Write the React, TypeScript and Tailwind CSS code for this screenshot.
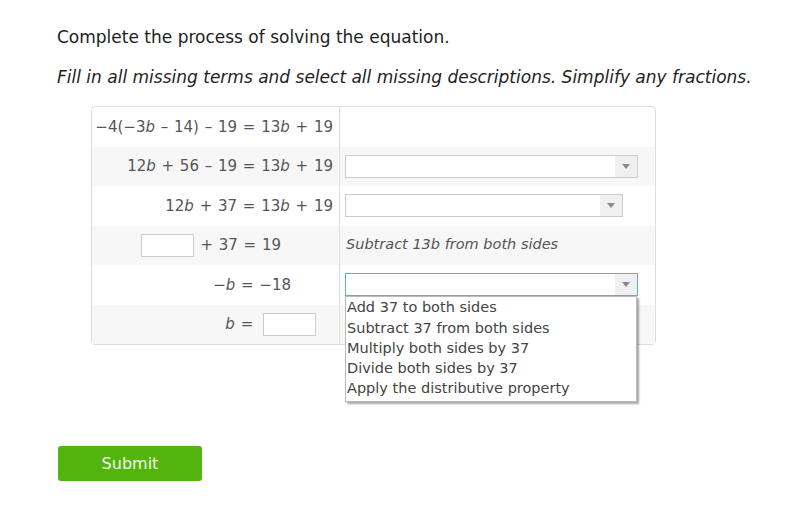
const Arrow = () => (
  <div className="w-[22px] h-full bg-[#f0f0f0] flex items-center justify-center">
    <div className="w-0 h-0 border-l-[4px] border-r-[4px] border-t-[5px] border-l-transparent border-r-transparent border-t-[#888]" />
  </div>
)

const Select = ({ width, focused }: { width: string; focused?: boolean }) => (
  <div className={`${width} h-[23px] bg-white border flex justify-end ${focused ? "border-[#5ab0d0]" : "border-[#ccc]"}`}>
    <Arrow />
  </div>
)

const B = () => <i>b</i>

const options = [
  "Add 37 to both sides",
  "Subtract 37 from both sides",
  "Multiply both sides by 37",
  "Divide both sides by 37",
  "Apply the distributive property",
]

const App = () => {
  return (
    <div className="w-[800px] h-[512px] bg-white pl-[57px] pt-[27px] font-['DejaVu_Sans',Verdana,sans-serif] text-[#222]">
      <p className="text-[17px] leading-5">Complete the process of solving the equation.</p>
      <p className="mt-5 text-[17px] leading-5 italic">Fill in all missing terms and select all missing descriptions. Simplify any fractions.</p>

      <div className="ml-[34px] mt-[19px] w-[565px] border border-[#ddd] rounded text-[15px] text-[#555] [word-spacing:1px]">
        <div className="flex h-[39.5px]">
          <div className="w-[248px] border-r border-[#ddd] flex items-center justify-end pr-[6px] whitespace-pre">
            −4(−3<B /> – 14) – 19 = 13<B /> + 19
          </div>
          <div className="flex-1" />
        </div>

        <div className="flex h-[39.5px] bg-[#f7f7f7]">
          <div className="w-[248px] border-r border-[#ddd] flex items-center justify-end pr-[6px] whitespace-pre">
            12<B /> + 56 – 19 = 13<B /> + 19
          </div>
          <div className="flex-1 flex items-center pl-[5px]">
            <Select width="w-[293px]" />
          </div>
        </div>

        <div className="flex h-[39.5px]">
          <div className="w-[248px] border-r border-[#ddd] flex items-center justify-end pr-[6px] whitespace-pre">
            12<B /> + 37 = 13<B /> + 19
          </div>
          <div className="flex-1 flex items-center pl-[5px]">
            <Select width="w-[278px]" />
          </div>
        </div>

        <div className="flex h-[39.5px] bg-[#f7f7f7]">
          <div className="w-[248px] border-r border-[#ddd] flex items-center justify-end pr-[58px] whitespace-pre">
            <span className="w-[53px] h-[23px] bg-white border border-[#ccc] mr-[6px]" />+ 37 = 19
          </div>
          <div className="flex-1 flex items-center pl-[6px] italic text-[#555] text-[14.5px] [word-spacing:0px]">Subtract 13b from both sides</div>
        </div>

        <div className="flex h-[39.5px]">
          <div className="w-[248px] border-r border-[#ddd] flex items-center justify-end pr-[48px] whitespace-pre">
            −<B /> = −18
          </div>
          <div className="flex-1 flex items-center pl-[5px]">
            <div className="relative">
              <Select width="w-[293px]" focused />
              <div className="absolute left-0 top-full w-[292px] bg-white border border-[#bbb] shadow-[2px_2px_2px_rgba(0,0,0,0.35)] pb-[2px] z-10 text-[14.5px] text-[#444] [word-spacing:0px]">
                {options.map((o) => (
                  <div key={o} className="h-[20.25px] leading-[20.25px] pl-[1px] whitespace-nowrap">{o}</div>
                ))}
              </div>
            </div>
          </div>
        </div>

        <div className="flex h-[39.5px] bg-[#f7f7f7]">
          <div className="w-[248px] border-r border-[#ddd] flex items-center justify-end pr-[23px] whitespace-pre">
            <B /> = <span className="w-[53px] h-[23px] bg-white border border-[#ccc] ml-[4px]" />
          </div>
          <div className="flex-1" />
        </div>
      </div>

      <button className="mt-[101px] ml-[1px] w-[144px] h-[35px] rounded-[3px] bg-[#52b40c] text-[#f4fbef] text-[16px]">Submit</button>
    </div>
  )
}

export default App
